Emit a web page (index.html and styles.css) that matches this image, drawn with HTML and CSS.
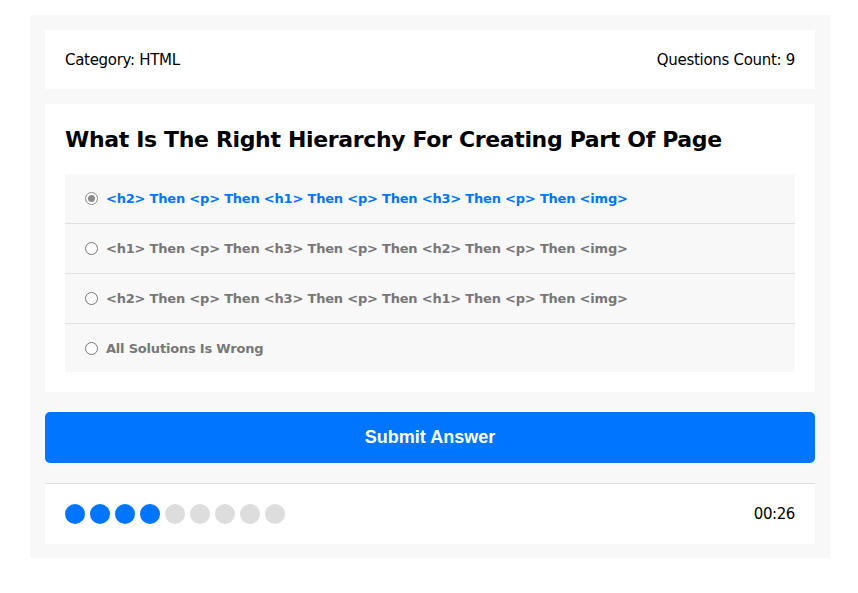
FILE: index.html
```html
<!DOCTYPE html>
<html>
<head>
<meta charset="utf-8">
<link rel="stylesheet" href="styles.css">
</head>
<body>
<div class="quiz">
  <div class="info">
    <span>Category: HTML</span>
    <span>Questions Count: 9</span>
  </div>
  <div class="question">
    <h2 class="title">What Is The Right Hierarchy For Creating Part Of Page</h2>
    <ul class="answers">
      <li class="answer checked"><span class="radio"></span><span>&lt;h2&gt; Then &lt;p&gt; Then &lt;h1&gt; Then &lt;p&gt; Then &lt;h3&gt; Then &lt;p&gt; Then &lt;img&gt;</span></li>
      <li class="answer"><span class="radio"></span><span>&lt;h1&gt; Then &lt;p&gt; Then &lt;h3&gt; Then &lt;p&gt; Then &lt;h2&gt; Then &lt;p&gt; Then &lt;img&gt;</span></li>
      <li class="answer"><span class="radio"></span><span>&lt;h2&gt; Then &lt;p&gt; Then &lt;h3&gt; Then &lt;p&gt; Then &lt;h1&gt; Then &lt;p&gt; Then &lt;img&gt;</span></li>
      <li class="answer"><span class="radio"></span><span>All Solutions Is Wrong</span></li>
    </ul>
  </div>
  <button class="submit">Submit Answer</button>
  <div class="footer">
    <div class="bullets">
      <span class="dot on"></span><span class="dot on"></span><span class="dot on"></span><span class="dot on"></span>
      <span class="dot"></span><span class="dot"></span><span class="dot"></span><span class="dot"></span><span class="dot"></span>
    </div>
    <div class="timer">00:26</div>
  </div>
</div>
</body>
</html>
```
FILE: styles.css
```css
* { box-sizing: border-box; }
body { margin: 0; padding: 15px 28px 0 30px; font-family: "DejaVu Sans", Tahoma, sans-serif; background: #fff; }
.quiz { width: 800px; background: #f8f8f8; padding: 15px 15px 14px; }
.info { background: #fff; height: 59px; padding: 0 20px; display: flex; justify-content: space-between; align-items: center; font-size: 15px; letter-spacing: -0.3px; color: #000; padding-top: 1px; }
.question { background: #fff; margin-top: 15px; padding: 20px; }
.title { margin: 0 0 20px; font-size: 22px; letter-spacing: -0.35px; font-weight: bold; line-height: 29px; padding-top: 1px; }
.answers { list-style: none; margin: 0; padding: 0; background: #f8f8f8; }
.answer { height: 50px; display: flex; align-items: center; padding-left: 20px; font-size: 13px; letter-spacing: -0.2px; font-weight: bold; color: #777; border-top: 1px solid #e0e0e0; }
.answer:first-child { border-top: none; height: 49px; }
.answer:last-child { height: 49px; }
.answer.checked { color: #0075ff; }
.radio { width: 13px; height: 13px; border: 1px solid #767676; border-radius: 50%; margin-right: 8px; background: #fff; flex-shrink: 0; display: inline-flex; align-items: center; justify-content: center; }
.checked .radio { border-color: #8a8a8a; }
.checked .radio::after { content: ""; width: 7px; height: 7px; border-radius: 50%; background: #8a8a8a; }
.submit { display: block; width: 100%; height: 51px; margin-top: 20px; border: none; border-radius: 5px; background: #0075ff; color: #fff; font-family: "Liberation Sans", Arial, sans-serif; font-weight: bold; font-size: 18px; }
.footer { margin-top: 20px; border-top: 1px solid #ddd; background: #fff; height: 61px; padding: 0 20px; display: flex; justify-content: space-between; align-items: center; }
.bullets { display: flex; gap: 5px; }
.dot { width: 20px; height: 20px; border-radius: 50%; background: #ddd; }
.dot.on { background: #0075ff; }
.timer { font-size: 15px; letter-spacing: -0.4px; }
```
